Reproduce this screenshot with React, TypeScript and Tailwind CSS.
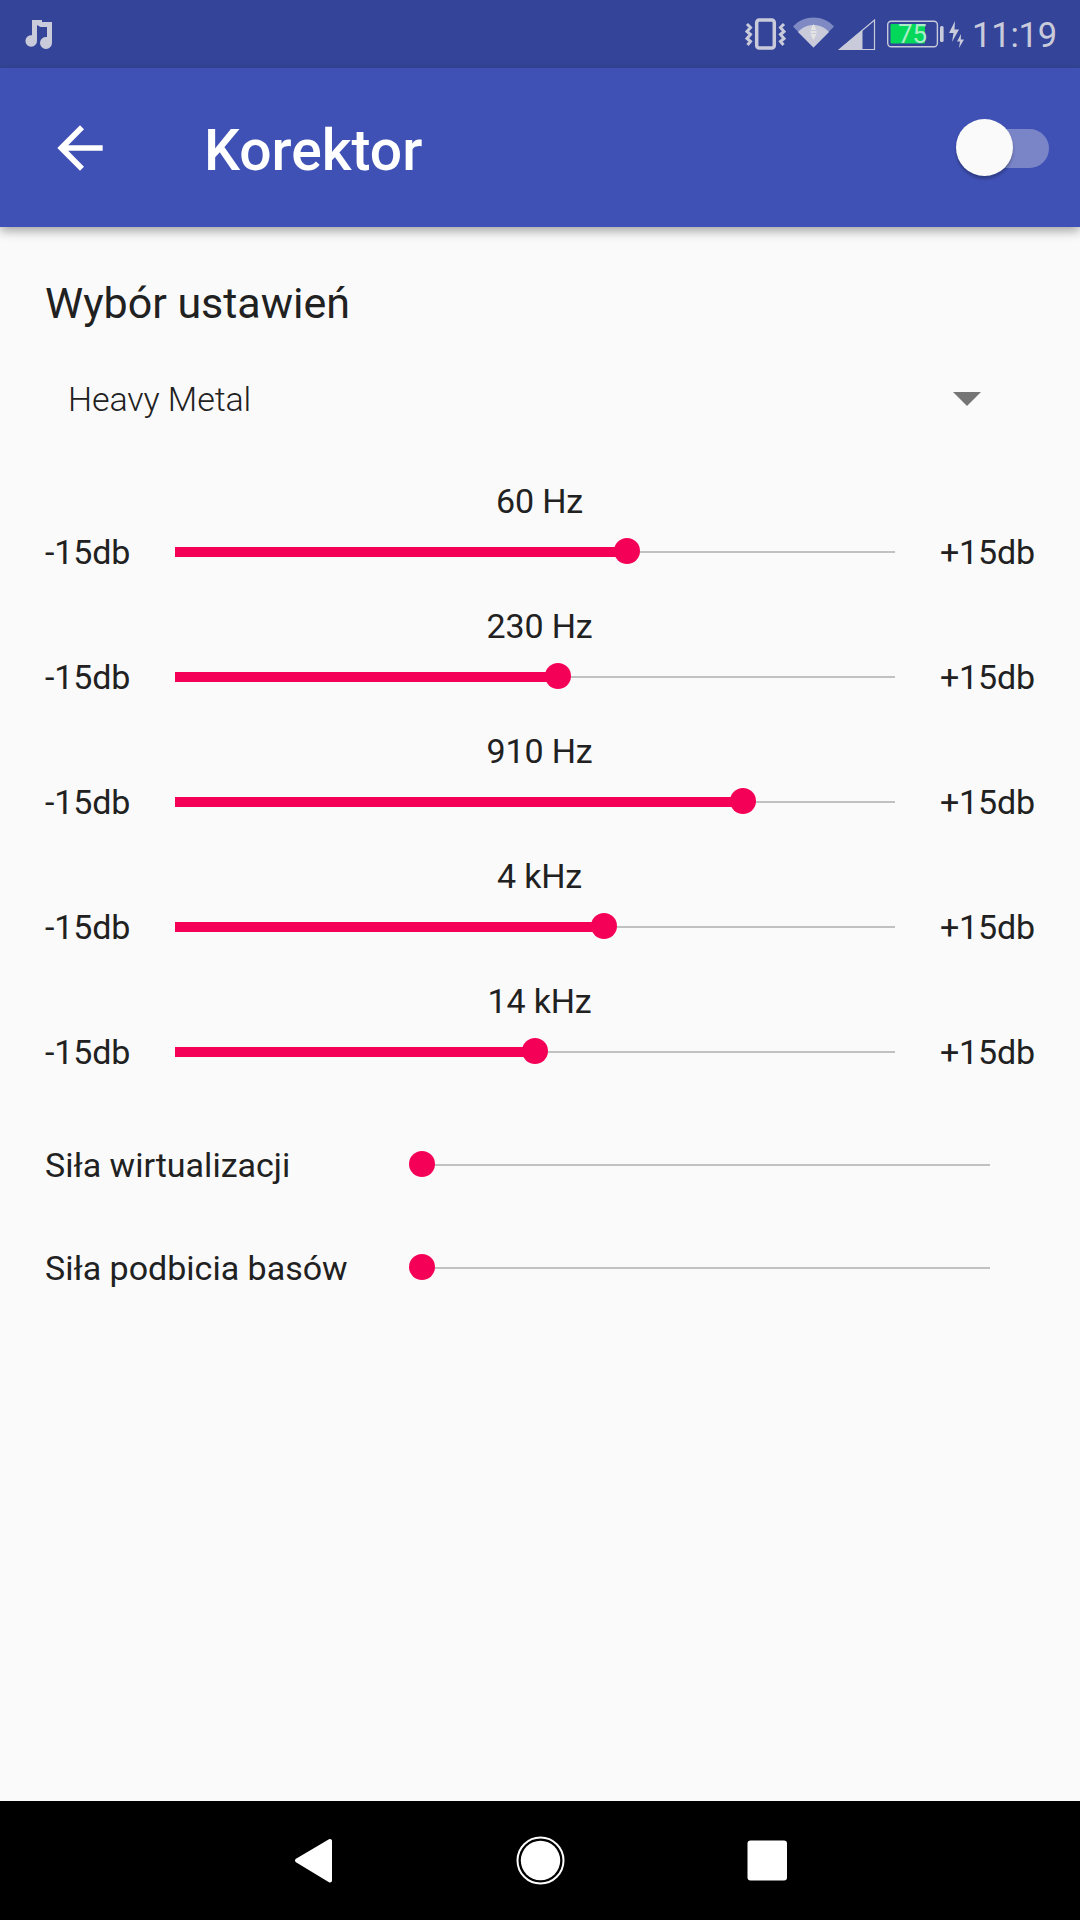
import {useState} from "react";

const initialBands = [
    {label: "60 Hz", value: 62.8},
    {label: "230 Hz", value: 53.2},
    {label: "910 Hz", value: 78.9},
    {label: "4 kHz", value: 59.6},
    {label: "14 kHz", value: 50},
];

function StatusBar() {
    return (
        <div className="flex h-[68px] items-center justify-between bg-[#344599] pl-6 text-[#c9cbdb]">
            <svg width="30" height="68" viewBox="24 0 30 68" fill="currentColor">
                <path d="M32 20h10v2h10v20.500a6 6 0 1 1-5-5.500V27h-6.500l-3.500-2v15.500a5.800 5.800 0 1 1-5-5.300z"/>
            </svg>

            <svg width="335" height="68" viewBox="745 0 335 68" fill="none">
                {/* vibrate */}
                <rect x="756.700" y="20" width="17.600" height="28" rx="2.500" stroke="currentColor" strokeWidth="3.500"/>
                <path
                    d="M747 24l3.500 3.500-3.500 4 3.500 3-3.500 4 3.500 3-3 3.500M784 24l-3.500 3.500 3.500 4-3.500 3 3.500 4-3.500 3 3 3.500"
                    stroke="currentColor"
                    strokeWidth="3"
                />

                {/* wifi */}
                <path d="M793 26.500C804 14.500 823 14.500 834 26.500L813.500 47.500z" fill="#7f89c3"/>
                <path d="M798 32C806 22.500 821 22.500 829 32L813.500 47.500z" fill="currentColor"/>
                <path d="M813.500 24l3 6h-6zM813.500 40l3-6h-6zM810.500 31h6v2h-6z" fill="#e4e4e4"/>

                {/* signal */}
                <path d="M839.500 49.500L874.500 20v29.500z" stroke="currentColor" strokeWidth="1.200"/>
                <path d="M838.500 50L862.500 30v20z" fill="currentColor"/>

                {/* battery */}
                <rect x="887.700" y="21.200" width="49.700" height="25.500" rx="3.500" stroke="currentColor" strokeWidth="1.400"/>
                <rect x="890.500" y="24" width="34.500" height="19.500" rx="1" fill="#04d85b"/>
                <rect x="940" y="26" width="3.600" height="16" rx="1.500" fill="currentColor"/>
                <path d="M955 21l-6 12h4.500l-1.500 9 7-12.500h-4.500zM961 34l-4 7.500h3l-1 6.500 5-8.500h-3.200z" fill="currentColor"/>
                <text x="898" y="43.200" fill="#a9eec6" fontFamily="Roboto, sans-serif" fontSize="26">
                    75
                </text>
                <text x="972" y="47" fill="currentColor" fontFamily="Roboto, sans-serif" fontSize="34.500" letterSpacing="-0.200">
                    11:19
                </text>
            </svg>
        </div>
    );
}

function Slider({value}: {value: number}) {
    return (
        <div className="relative h-[26px] flex-1">
            <div className="absolute inset-x-0 top-[13px] h-[2px] bg-[#c1c1c1]"/>
            <div className="absolute left-0 top-[9.300px] h-[9.400px] bg-[#f50057]" style={{width: `${value}%`}}/>
            <div
                className="absolute top-0 size-[26px] -translate-x-1/2 rounded-full bg-[#f50057]"
                style={{left: `${value}%`}}
            />
        </div>
    );
}

function Band({label, value}: {label: string; value: number}) {
    return (
        <div className="h-[125px] tracking-[-0.15px]">
            <div className="h-10 pr-px text-center leading-10">{label}</div>
            <div className="mt-[10px] flex h-10 items-center">
                <span className="w-[130px] pt-[2px] leading-10">-15db</span>
                <Slider value={value}/>
                <span className="w-[140px] pt-[2px] text-right leading-10">+15db</span>
            </div>
        </div>
    );
}

export default function App() {
    const [enabled, setEnabled] = useState(false);

    return (
        <div
            className="flex h-[1920px] w-[1080px] flex-col overflow-hidden bg-[#fafafa] font-['Roboto',sans-serif] text-[34px] text-[#212121]">
            <StatusBar/>

            <header
                className="flex h-[159px] items-center bg-[#3f51b5] pl-[46px] pr-[31px] text-white shadow-[0_4px_10px_rgba(0,0,0,0.35)]">
                <svg className="size-[68px]" viewBox="0 0 24 24" fill="currentColor">
                    <path d="M20 11H7.830l5.590-5.590L12 4l-8 8 8 8 1.410-1.410L7.830 13H20v-2z"/>
                </svg>
                <h1 className="ml-[90px] mt-[6px] text-[57px] font-medium leading-none">Korektor</h1>
                <button
                    onClick={() => setEnabled(!enabled)}
                    className="relative ml-auto mt-[2px] h-[39px] w-[85px] rounded-full bg-[#7a85c8]"
                >
                    <span
                        className={`absolute -top-[10px] size-[57px] rounded-full bg-[#fafafa] shadow-[0_3px_3px_rgba(0,0,0,0.25)] ${enabled ? "right-[-8px]" : "left-[-8px]"}`}
                    />
                </button>
            </header>

            <main className="flex flex-1 flex-col px-[45px] pt-[50px]">
                <h2 className="text-[43px] leading-[52px]">Wybór ustawień</h2>

                <div className="mt-[50px] flex h-10 items-center justify-between pl-[23px] pr-[54px] font-light tracking-[-0.1px]">
                    <span>Heavy Metal</span>
                    <svg width="28" height="14" viewBox="0 0 28 14" fill="#757575">
                        <path d="M0 0h28L14 14z"/>
                    </svg>
                </div>

                <div className="mt-[62px]">
                    {initialBands.map((band) => (
                        <Band key={band.label} label={band.label} value={band.value}/>
                    ))}
                </div>

                <div className="mt-[38px] flex h-10 items-center pr-[45px]">
                    <span className="w-[377px] pt-[2px]">Siła wirtualizacji</span>
                    <Slider value={0}/>
                </div>
                <div className="mt-[63px] flex h-10 items-center pr-[45px]">
                    <span className="w-[377px] pt-[2px]">Siła podbicia basów</span>
                    <Slider value={0}/>
                </div>
            </main>

            <nav className="h-[119px] bg-black">
                <svg width="1080" height="119" viewBox="0 1801 1080 119" fill="white">
                    <path
                        d="M297 1860.500L330 1841v39.500z"
                        stroke="white"
                        strokeWidth="4"
                        strokeLinejoin="round"
                    />
                    <circle cx="540.500" cy="1860.500" r="23" fill="none" stroke="white" strokeWidth="2"/>
                    <circle cx="540.500" cy="1860.500" r="19.700"/>
                    <rect x="747.500" y="1840.500" width="39.500" height="40" rx="3"/>
                </svg>
            </nav>
        </div>
    );
}
